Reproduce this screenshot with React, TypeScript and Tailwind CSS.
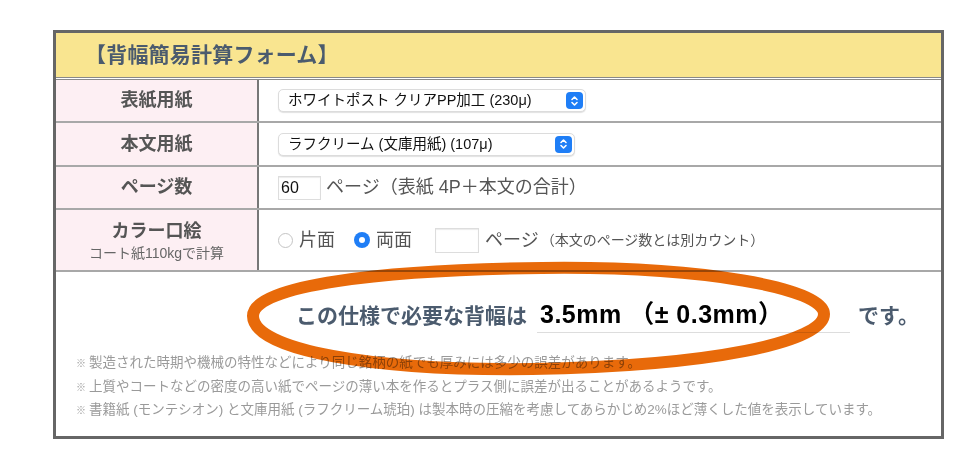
import React from 'react'

const font = { fontFamily: '"Liberation Sans", "Noto Sans CJK JP", sans-serif' }

function SelectBox({ label, width }: { label: string; width: string }) {
  return (
    <div
      className={`flex items-center justify-between h-[23px] pl-[9px] pr-[2px] bg-white border border-[#dcdcdc] rounded-[5px] shadow-[0_1px_1px_rgba(0,0,0,0.12)] ${width}`}
    >
      <span className="text-[14.5px] text-[#111] leading-none">{label}</span>
      <span className="flex items-center justify-center w-[17px] h-[17px] rounded-[4px] bg-[#1f7ef6]">
        <svg width="9" height="12" viewBox="0 0 9 12" fill="none">
          <path d="M2 4.5 L4.5 2 L7 4.5" stroke="white" strokeWidth="1.6" strokeLinecap="round" strokeLinejoin="round" />
          <path d="M2 7.5 L4.5 10 L7 7.5" stroke="white" strokeWidth="1.6" strokeLinecap="round" strokeLinejoin="round" />
        </svg>
      </span>
    </div>
  )
}

function Row({ label, sub, children, h }: { label: string; sub?: string; children: React.ReactNode; h: string }) {
  return (
    <div className={`flex ${h} border-b-2 border-[#a8a8a8]`}>
      <div className="w-[203px] shrink-0 bg-[#fdeff3] border-r-2 border-[#777] flex flex-col items-center justify-center">
        <span className="text-[18px] font-bold text-[#555] leading-tight">{label}</span>
        {sub && <span className="text-[14px] text-[#666] mt-[4px] leading-none">{sub}</span>}
      </div>
      <div className="flex items-center pl-[19px] flex-1">{children}</div>
    </div>
  )
}

const Note = ({ children }: { children: React.ReactNode }) => (
  <p>
    <span className="text-[10px] mr-[3px]">※</span>
    {children}
  </p>
)

export default function App() {
  return (
    <div className="w-[980px] h-[468px] bg-white pt-[30px] pl-[53px]" style={font}>
      <div className="relative w-[891px] border-[3px] border-[#666]">
        <div className="h-[45px] bg-[#f9e590] flex items-center pl-[29px] border-b border-[#888]">
          <span className="text-[21px] font-bold text-[#4b5b6e] tracking-[0.2px]">【背幅簡易計算フォーム】</span>
        </div>
        <div className="h-[2px] bg-white border-b border-[#888]" />
        <Row label="表紙用紙" h="h-[43px]">
          <SelectBox label="ホワイトポスト クリアPP加工 (230μ)" width="w-[308px]" />
        </Row>
        <Row label="本文用紙" h="h-[44px]">
          <SelectBox label="ラフクリーム (文庫用紙) (107μ)" width="w-[297px]" />
        </Row>
        <Row label="ページ数" h="h-[43px]">
          <div className="w-[43px] h-[24px] border border-[#ddd] shadow-[inset_0_1px_1px_rgba(0,0,0,0.08)] flex items-center pl-[2px] text-[16px] text-[#111]">
            60
          </div>
          <span className="ml-[5px] text-[18px] text-[#555]">ページ（表紙 4P＋本文の合計）</span>
        </Row>
        <Row label="カラー口絵" sub="コート紙110kgで計算" h="h-[62px]">
          <span className="w-[15px] h-[15px] rounded-full border border-[#c4c4c4] bg-white" />
          <span className="ml-[6px] text-[18px] text-[#555]">片面</span>
          <span className="ml-[19px] w-[16px] h-[16px] rounded-full bg-[#1f7ef6] flex items-center justify-center">
            <span className="w-[6px] h-[6px] rounded-full bg-white" />
          </span>
          <span className="ml-[6px] text-[18px] text-[#555]">両面</span>
          <span className="ml-[23px] w-[44px] h-[25px] border border-[#ddd] shadow-[inset_0_1px_1px_rgba(0,0,0,0.08)]" />
          <span className="ml-[6px] text-[18px] text-[#555]">ページ</span>
          <span className="ml-[2px] text-[14px] text-[#555]">（本文のページ数とは別カウント）</span>
        </Row>
        <div className="h-[164px] pt-[26px]">
          <div className="flex items-center pl-[240px]">
            <span className="text-[21px] font-bold text-[#4b5b6e]">この仕様で必要な背幅は</span>
            <div className="ml-[10px] w-[313px] h-[35px] border-b border-[#ddd] flex items-center pl-[3px]">
              <span className="text-[25px] font-bold text-black tracking-[0.5px]">3.5mm （± 0.3mm）</span>
            </div>
            <span className="ml-[8px] text-[21px] font-bold text-[#4b5b6e]">です。</span>
          </div>
          <div className="mt-[21px] pl-[20px] flex flex-col gap-[5px] text-[13.5px] text-[#9a9a9a] leading-[17.5px]">
            <Note>製造された時期や機械の特性などにより同じ銘柄の紙でも厚みには多少の誤差があります。</Note>
            <Note>上質やコートなどの密度の高い紙でページの薄い本を作るとプラス側に誤差が出ることがあるようです。</Note>
            <Note>書籍紙 (モンテシオン) と文庫用紙 (ラフクリーム琥珀) は製本時の圧縮を考慮してあらかじめ2%ほど薄くした値を表示しています。</Note>
          </div>
        </div>
        <svg
          className="absolute left-[186px] top-[225px] pointer-events-none mix-blend-multiply"
          width="600"
          height="120"
          viewBox="0 0 600 120"
        >
          <path
            d="M300 10 C460 8 582 30 582 56 C582 84 470 108 290 111 C130 113 11 92 11 58 C11 27 140 12 300 10 Z"
            fill="none"
            stroke="#e86a0a"
            strokeWidth="12"
          />
        </svg>
      </div>
    </div>
  )
}
